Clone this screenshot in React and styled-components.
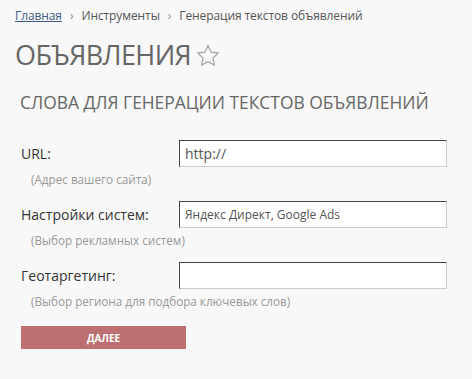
import React from 'react';
import styled, { createGlobalStyle } from 'styled-components';

const GlobalStyle = createGlobalStyle`
  html, body {
    margin: 0;
    padding: 0;
    background: #f8f8f8;
  }
  body {
    font-family: "Open Sans", "DejaVu Sans", sans-serif;
    color: #333;
  }
`;

const Page = styled.div`
  padding: 6px 15px 0 15px;
`;

const Crumbs = styled.nav`
  display: flex;
  align-items: center;
  gap: 8px;
  font-size: 12px;
  letter-spacing: -0.1px;
  line-height: 20px;
  color: #555;
`;

const CrumbLink = styled.a`
  color: #3d5a80;
  text-decoration: underline;
`;

const Sep = styled.span`
  color: #888;
  font-size: 12px;
`;

const TitleRow = styled.div`
  display: flex;
  align-items: center;
  gap: 5px;
  margin-top: 14px;
`;

const Title = styled.h1`
  margin: 0;
  font-size: 27px;
  font-weight: 400;
  letter-spacing: -0.6px;
  line-height: 30px;
  color: #666;
`;

const Section = styled.h2`
  margin: 21px 0 0 5px;
  font-size: 17.4px;
  font-weight: 400;
  line-height: 22px;
  color: #666;
`;

const Form = styled.form`
  margin: 27px 0 0 6px;
  display: flex;
  flex-direction: column;
  gap: 14px;
`;

const Field = styled.div`
  display: grid;
  grid-template-columns: 158px 268px;
  row-gap: 4px;
`;

const Label = styled.label`
  font-size: 14px;
  align-self: center;
  color: #333;
`;

const Input = styled.input`
  box-sizing: border-box;
  height: 27px;
  width: 268px;
  background: #fff;
  border-style: solid;
  border-width: 1px;
  border-color: #444 #ccc #ccc #444;
  padding: 0 5px;
  font-family: inherit;
  font-size: ${p => (p.$small ? '12px' : '14px')};
  color: #555;
  outline: none;
`;

const Hint = styled.div`
  grid-column: 1 / -1;
  padding-left: 10px;
  font-size: 11.7px;
  color: #999;
`;

const Button = styled.button`
  margin-top: 3px;
  width: 165px;
  height: 23px;
  border: none;
  background: #be6f72;
  color: #fff;
  font-family: inherit;
  font-size: 10px;
  font-weight: 700;
  cursor: pointer;
`;

const Star = () => (
  <svg width="24" height="23" viewBox="0 0 24 23">
    <path
      d="M12 1.5l3.1 6.6 7.2.9-5.3 5 1.4 7.1L12 17.6l-6.4 3.5 1.4-7.1-5.3-5 7.2-.9z"
      fill="none"
      stroke="#aaa"
      strokeWidth="1.3"
      strokeLinejoin="round"
    />
  </svg>
);

const fields = [
  { label: 'URL:', value: 'http://', hint: '(Адрес вашего сайта)' },
  { label: 'Настройки систем:', value: 'Яндекс Директ, Google Ads', hint: '(Выбор рекламных систем)', small: true },
  { label: 'Геотаргетинг:', value: '', hint: '(Выбор региона для подбора ключевых слов)' },
];

const App = () => (
  <Page>
    <GlobalStyle />
    <Crumbs>
      <CrumbLink href="#">Главная</CrumbLink>
      <Sep>›</Sep>
      <span>Инструменты</span>
      <Sep>›</Sep>
      <span>Генерация текстов объявлений</span>
    </Crumbs>
    <TitleRow>
      <Title>ОБЪЯВЛЕНИЯ</Title>
      <Star />
    </TitleRow>
    <Section>СЛОВА ДЛЯ ГЕНЕРАЦИИ ТЕКСТОВ ОБЪЯВЛЕНИЙ</Section>
    <Form onSubmit={e => e.preventDefault()}>
      {fields.map(f => (
        <Field key={f.label}>
          <Label>{f.label}</Label>
          <Input defaultValue={f.value} $small={f.small} />
          <Hint>{f.hint}</Hint>
        </Field>
      ))}
      <Button type="submit">ДАЛЕЕ</Button>
    </Form>
  </Page>
);

export default App;
